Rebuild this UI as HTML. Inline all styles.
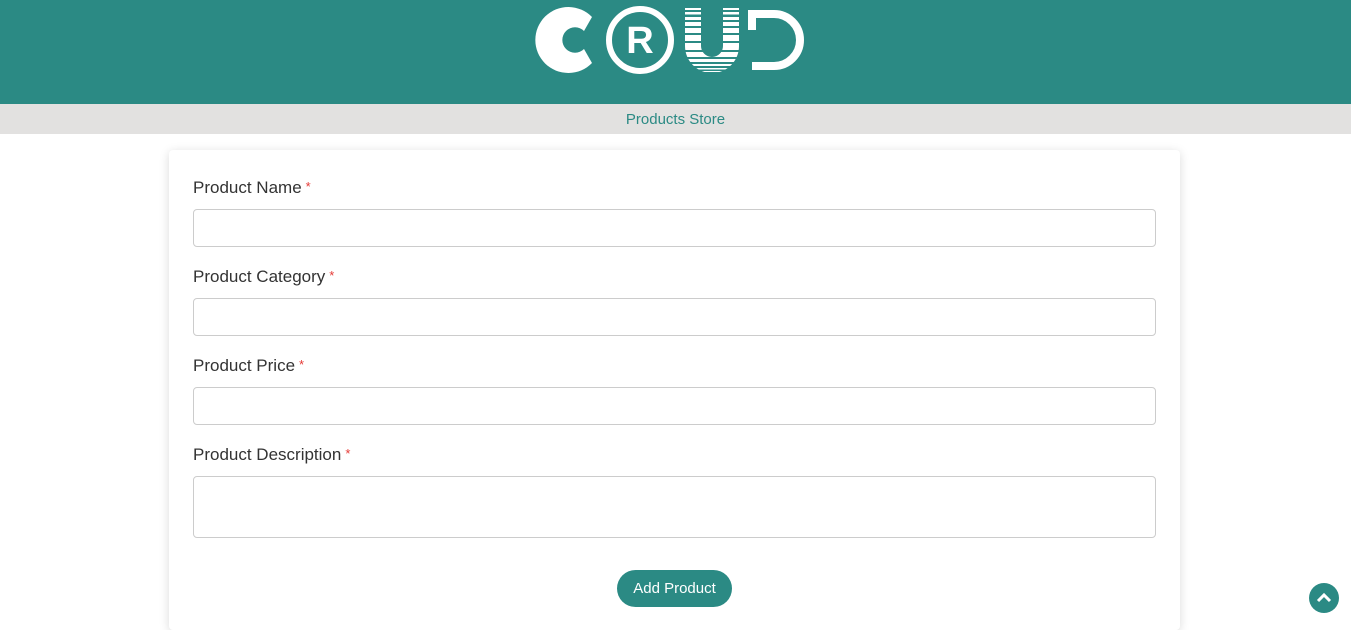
<!DOCTYPE html>
<html><head><style>
body{margin:0;width:1351px;height:623px;overflow:hidden;background:#fff;font-family:"Liberation Sans",sans-serif;position:relative}
.hdr{height:104px;background:#2b8a84;position:relative}
.sub{height:30px;background:#e2e1e0;color:#2b8a84;text-align:center;font-size:15px;line-height:31px}
.card{position:absolute;left:169px;top:150px;width:1011px;height:480px;background:#fff;box-shadow:0 2px 10px rgba(0,0,0,.15);border-radius:4px}
label{position:absolute;left:24px;font-size:17px;color:#333}
label span{color:#e53935;font-size:13px;margin-left:4px;vertical-align:2px}
.in{position:absolute;left:24px;width:963px;height:38px;border:1px solid #ccc;border-radius:4px;box-sizing:border-box}
.btn{position:absolute;left:448px;top:420px;width:115px;height:37px;border-radius:19px;background:#2b8a84;color:#fff;font-size:15px;text-align:center;line-height:37px}
.top{position:absolute;left:1309px;top:583px;width:30px;height:30px;border-radius:50%;background:#2b8a84}
</style></head><body>
<div class="hdr">
<svg width="1351" height="104" style="position:absolute;left:0;top:0">
<defs><clipPath id="u"><path d="M685 8h16v38a11 11 0 0 0 22 0V8h16v38a27 27 0 0 1-54 0z"/></clipPath></defs>
<path d="M592 17 A33 33 0 1 0 592 63 L584 49 A12.7 12.7 0 1 1 584 31 Z" fill="#fff"/>
<circle cx="640" cy="40" r="31" fill="none" stroke="#fff" stroke-width="6"/>
<text x="640" y="53" font-family="Liberation Sans" font-weight="bold" font-size="38" fill="#fff" text-anchor="middle">R</text>
<g clip-path="url(#u)" fill="#fff">
<rect x="685" y="8" width="54" height="2"/><rect x="685" y="12" width="54" height="2.5"/><rect x="685" y="17" width="54" height="3"/><rect x="685" y="22" width="54" height="4"/><rect x="685" y="28" width="54" height="5"/><rect x="685" y="35" width="54" height="6"/><rect x="685" y="43" width="54" height="7"/><rect x="685" y="52" width="54" height="5"/><rect x="685" y="59" width="54" height="3"/><rect x="685" y="64" width="54" height="2"/><rect x="685" y="68" width="54" height="1.5"/><rect x="685" y="71" width="54" height="1"/>
</g>
<path d="M752 14h22a26 26 0 0 1 0 52h-22" fill="none" stroke="#fff" stroke-width="8"/>
<rect x="748" y="10" width="8" height="20" fill="#fff"/>
</svg>
</div>
<div class="sub">Products Store</div>
<div class="card">
<label style="top:28px">Product Name<span>*</span></label>
<div class="in" style="top:59px"></div>
<label style="top:117px">Product Category<span>*</span></label>
<div class="in" style="top:148px"></div>
<label style="top:206px">Product Price<span>*</span></label>
<div class="in" style="top:237px"></div>
<label style="top:295px">Product Description<span>*</span></label>
<div class="in" style="top:326px;height:62px"></div>
<div class="btn">Add Product</div>
</div>
<div class="top"><svg width="30" height="30"><path d="M9 18l6-6 6 6" fill="none" stroke="#fff" stroke-width="3"/></svg></div>
</body></html>
